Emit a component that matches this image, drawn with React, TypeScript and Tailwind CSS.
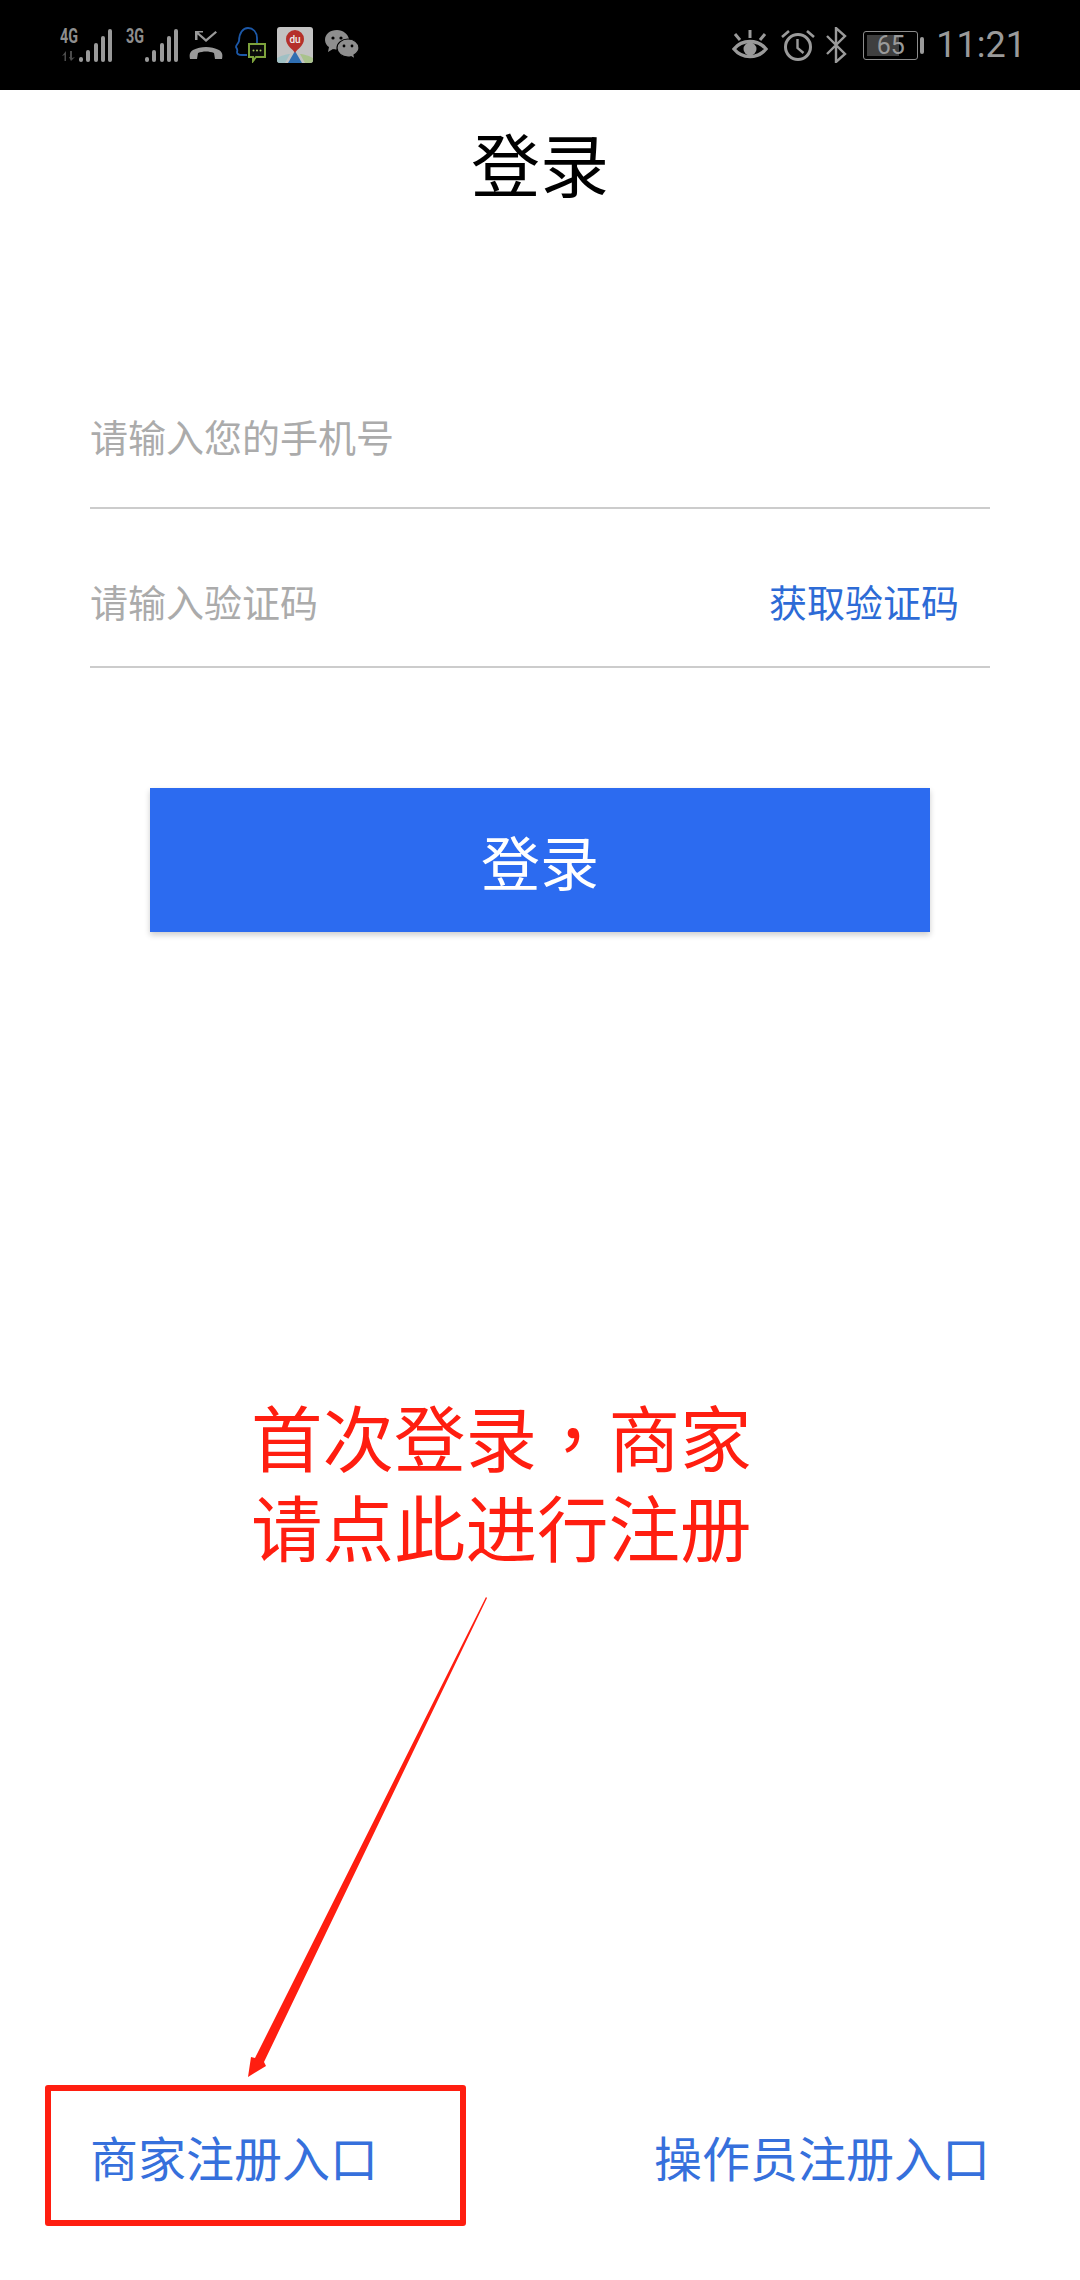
const cjk = { fontFamily: '"Noto Sans CJK SC", "Noto Sans", sans-serif' };

function Signal({ label, sub }: { label: string; sub?: boolean }) {
  return (
    <svg width="53" height="42" viewBox="0 -5 53 42" className="shrink-0">
      <text x="0" y="14" fontFamily="Roboto, sans-serif" fontWeight="700" fontSize="21" fill="#8e8e8e" textLength="18" lengthAdjust="spacingAndGlyphs">{label}</text>
      {sub && <path d="M2 27l4-5v10h-1.5v-6zM10 22h2v7l3-1-4 4-2-4h1z" fill="#4c4c4c" />}
      <g fill="#9a9a9a">
        <rect x="19" y="28" width="4" height="5" rx="2" />
        <rect x="26" y="21" width="4" height="12" rx="2" />
        <rect x="34" y="14" width="4" height="19" rx="2" />
        <rect x="41" y="7" width="4" height="26" rx="2" />
        <rect x="48" y="0" width="4" height="33" rx="2" />
      </g>
    </svg>
  );
}

function MissedCall() {
  return (
    <svg width="34" height="32" viewBox="0 0 34 32" className="shrink-0">
      <path d="M6 2v9h2.5V5.5L17 13 28 3.5 26.5 2 17 10 9.5 3.5H14V2z" fill="#9a9a9a" />
      <path d="M1 30c-1-5 0-7 3-9 8-4 18-4 26 0 3 2 4 4 3 9h-7l-1-6c-5-2-11-2-16 0l-1 6z" fill="#9a9a9a" />
    </svg>
  );
}

function QQChat() {
  return (
    <svg width="32" height="36" viewBox="0 0 32 36" className="shrink-0">
      <path d="M13 28H8c-3 0-5-1-5-3 1-2 0-3-1-5 0-2 2-3 3-6C5 6 9 1 14 1s9 4 9 10v5" fill="none" stroke="#1c58a8" strokeWidth="1.8" />
      <path d="M15 17h16v13h-9l-3 4v-4h-4z" fill="#0a0a0a" stroke="#7da23c" strokeWidth="2" />
      <g fill="#a5c25e"><circle cx="19.5" cy="23.5" r="1" /><circle cx="23" cy="23.5" r="1" /><circle cx="26.5" cy="23.5" r="1" /></g>
    </svg>
  );
}

function MapIcon() {
  return (
    <svg width="36" height="36" viewBox="0 0 36 36" className="shrink-0">
      <rect width="36" height="36" rx="3" fill="#c3c3c3" />
      <path d="M0 31c6-3 10-4 13-4l-5 9H3c-2 0-3-1-3-3z" fill="#9fc0c4" />
      <path d="M36 31c-6-3-10-4-13-4l5 9h5c2 0 3-1 3-3z" fill="#a9c28c" />
      <path d="M18 24L11 36h14z" fill="#2f6fb2" />
      <path d="M18 26c-2-4-9-7-9-14a9 9 0 0 1 18 0c0 7-7 10-9 14z" fill="#b5302a" />
      <text x="18" y="16" textAnchor="middle" fontFamily="Roboto, sans-serif" fontSize="10" fontWeight="500" fill="#eee">du</text>
    </svg>
  );
}

function WeChat() {
  return (
    <svg width="34" height="30" viewBox="0 0 34 30" className="shrink-0">
      <path d="M12 0C5 0 0 4 0 10c0 3 2 6 4 7l-1 5 5-3c1 .3 2 .4 4 .4 1 0 2-.1 3-.3C20 17 25 13 24 9 23 4 18 0 12 0z" fill="#8e8e8e" />
      <path d="M23 9c-6 0-11 4-11 9s5 9 11 9c1 0 2 0 3-.3L30 29l-1-4c3-2 5-4 5-7 0-5-5-9-11-9z" fill="#8e8e8e" stroke="#000" strokeWidth="1.2" />
      <g fill="#000"><circle cx="8" cy="8" r="1.6" /><circle cx="16" cy="8" r="1.6" /><circle cx="19" cy="16" r="1.4" /><circle cx="27" cy="16" r="1.4" /></g>
    </svg>
  );
}

function Eye() {
  return (
    <svg width="36" height="32" viewBox="0 0 36 32" className="shrink-0">
      <path d="M2 20c8-10 24-10 32 0-8 10-24 10-32 0z" fill="none" stroke="#9a9a9a" strokeWidth="3.4" />
      <circle cx="18" cy="20" r="6.5" fill="#9a9a9a" />
      <path d="M18 1v8M3 5l5 6M33 5l-5 6" stroke="#9a9a9a" strokeWidth="3" fill="none" />
    </svg>
  );
}

function Alarm() {
  return (
    <svg width="34" height="32" viewBox="0 0 34 32" className="shrink-0">
      <circle cx="17" cy="18" r="12.5" fill="none" stroke="#9a9a9a" strokeWidth="3" />
      <path d="M16.5 10v9l6 5" fill="none" stroke="#9a9a9a" strokeWidth="2.4" />
      <path d="M1 8l7-6M33 8l-7-6" fill="none" stroke="#9a9a9a" strokeWidth="2.6" />
    </svg>
  );
}

function Bluetooth() {
  return (
    <svg width="22" height="36" viewBox="0 0 22 36" className="shrink-0">
      <path d="M2 9l18 18-9 8V1l9 8L2 27" fill="none" stroke="#9a9a9a" strokeWidth="2.4" />
    </svg>
  );
}

function Battery() {
  return (
    <div className="flex shrink-0 items-center gap-[2px]">
      <div className="relative flex h-[29px] w-[55px] items-center justify-center rounded-[3px] border border-[#8c8c8c]">
        <div className="absolute top-[3px] bottom-[3px] left-[3px] w-[32px] bg-[#3f3f3f]" />
        <span className="relative text-[25px] leading-none text-[#9a9a9a]" style={{ fontFamily: 'Roboto, sans-serif' }}>65</span>
      </div>
      <div className="h-[17px] w-[4px] rounded-[2px] bg-[#9a9a9a]" />
    </div>
  );
}

export default function App() {
  return (
    <div className="relative flex h-[2280px] w-[1080px] flex-col overflow-hidden bg-white" style={cjk}>
      <div className="flex h-[90px] shrink-0 items-center justify-between bg-black pr-[54px] pl-[60px]">
        <div className="flex items-center">
          <Signal label="4G" sub />
          <div className="w-[13px]" />
          <Signal label="3G" />
          <div className="w-[10px]" />
          <MissedCall />
          <div className="w-[11px]" />
          <QQChat />
          <div className="w-[11px]" />
          <MapIcon />
          <div className="w-[12px]" />
          <WeChat />
        </div>
        <div className="flex items-center">
          <Eye />
          <div className="w-[13px]" />
          <Alarm />
          <div className="w-[10px]" />
          <Bluetooth />
          <div className="w-[16px]" />
          <Battery />
          <div className="w-[12px]" />
          <span className="text-[36px] leading-none text-[#9a9a9a]" style={{ fontFamily: 'Roboto, sans-serif' }}>11:21</span>
        </div>
      </div>

      <h1 className="flex h-[144px] shrink-0 items-center justify-center text-[69px] leading-none font-normal text-black">登录</h1>

      <div className="mx-[90px] mt-[133px] flex flex-col">
        <div className="flex h-[142px] items-center border-b-2 border-[#cccccc] pb-[2px]">
          <span className="text-[38px] leading-none text-[#ababab]">请输入您的手机号</span>
        </div>
        <div className="mt-[29px] flex h-[130px] items-center justify-between border-b-2 border-[#cccccc] pr-[31px] pb-[2px]">
          <span className="text-[38px] leading-none text-[#ababab]">请输入验证码</span>
          <span className="text-[38px] leading-none text-[#2d6bd6]">获取验证码</span>
        </div>
      </div>

      <button className="mx-auto mt-[120px] flex h-[144px] w-[780px] items-center justify-center bg-[#2c6bf0] text-[59px] leading-none text-white shadow-[0_3px_6px_rgba(0,0,0,0.2)]">登录</button>

      <div className="mt-auto mb-[74px] flex h-[100px] items-center justify-between px-[90px]">
        <span className="text-[48px] leading-none text-[#3670dc]">商家注册入口</span>
        <span className="text-[48px] leading-none text-[#3670dc]">操作员注册入口</span>
      </div>

      <div className="absolute top-[1390px] left-[251px] w-[510px] text-[71.5px] leading-[90px] text-[#ff1e10]">
        <div className="whitespace-nowrap">首次登录<span style={{ fontFamily: '"Noto Sans CJK TC", sans-serif' }}>，</span>商家</div>
        <div className="whitespace-nowrap">请点此进行注册</div>
      </div>
      <svg className="absolute top-[1590px] left-[240px]" width="260" height="495" viewBox="240 1590 260 495">
        <polygon points="486,1597 487,1598 264,2062 266,2066 248,2077 251,2057 255,2058" fill="#ff1e10" />
      </svg>
      <div className="absolute top-[2085px] left-[45px] h-[141px] w-[421px] rounded-[3px] border-[6px] border-[#ff1e10]" />
    </div>
  );
}
